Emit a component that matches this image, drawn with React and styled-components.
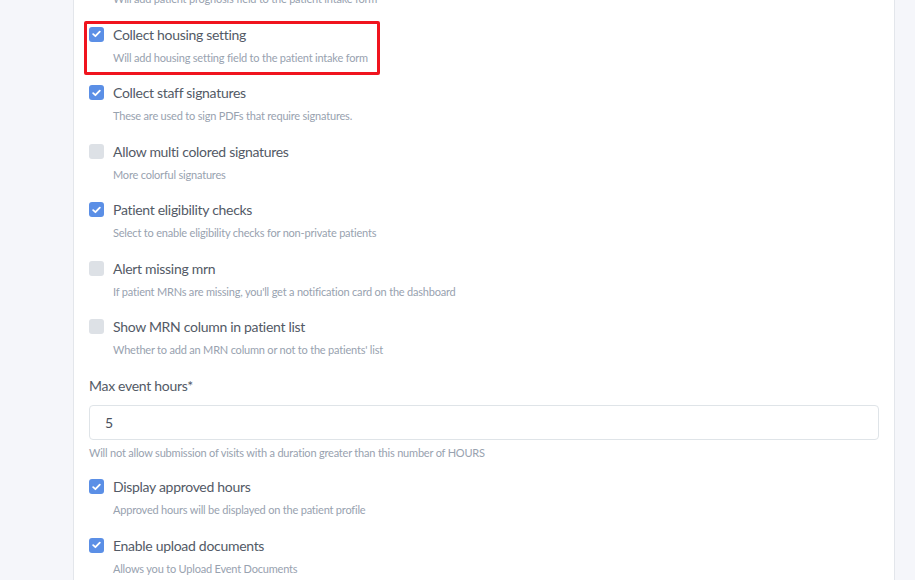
import React, { useLayoutEffect, useRef } from "react";
import styled, { createGlobalStyle } from "styled-components";

const Global = createGlobalStyle`
  html, body { margin: 0; padding: 0; }
  body {
    background: #f5f6fa;
    font-family: "Lato", "Noto Sans", sans-serif;
    -webkit-font-smoothing: antialiased;
  }
`;

const Viewport = styled.div`
  height: 100vh;
  overflow: hidden;
`;

const Page = styled.div`
  display: flex;
  padding-left: 73px;
  padding-right: 20px;
`;

const Card = styled.div`
  flex: 1;
  background: #ffffff;
  border-left: 1px solid #e3e6eb;
  border-right: 1px solid #e3e6eb;
  padding: 16px 15px 40px 15px;
  display: flex;
  flex-direction: column;
  gap: 17.5px;
`;

const Row = styled.div`
  position: relative;
  display: flex;
  align-items: flex-start;
  gap: 9px;
  width: fit-content;

  ${(p) =>
    p.$highlight &&
    `
    &::after {
      content: "";
      position: absolute;
      left: -5px;
      right: -12px;
      top: -4px;
      bottom: -9px;
      border: 3px solid #f0141e;
      border-radius: 2px;
      pointer-events: none;
    }
  `}
`;

const Box = styled.span`
  flex: none;
  width: 15px;
  height: 15px;
  margin-top: 2px;
  border-radius: 3px;
  background: ${(p) => (p.$checked ? "#5b8fe6" : "#dde1e6")};
  display: flex;
  align-items: center;
  justify-content: center;
`;

const Texts = styled.div`
  display: flex;
  flex-direction: column;
  gap: 5px;
`;

const Title = styled.div`
  font-size: 14px;
  line-height: 20px;
  letter-spacing: -0.3px;
  color: #535a66;
`;

const Desc = styled.div`
  font-size: 11px;
  line-height: 16px;
  letter-spacing: -0.2px;
  color: #98a2af;
`;

const Field = styled.div`
  display: flex;
  flex-direction: column;
  margin-bottom: -1px;
`;

const Label = styled.div`
  font-size: 14px;
  line-height: 20px;
  letter-spacing: -0.3px;
  color: #535a66;
`;

const Input = styled.div`
  margin-top: 9px;
  height: 33px;
  border: 1px solid #dfe4e8;
  border-radius: 4px;
  display: flex;
  align-items: center;
  padding-left: 15px;
  font-size: 14px;
  color: #4a505c;
`;

const Help = styled.div`
  margin-top: 5px;
  font-size: 11px;
  line-height: 16px;
  letter-spacing: -0.2px;
  color: #98a2af;
`;

const Check = () => (
  <svg width="9" height="8" viewBox="0 0 9 8">
    <path d="M1.2 4.2 L3.4 6.2 L7.8 1.6" fill="none" stroke="#fff" strokeWidth="1.8" strokeLinecap="round" strokeLinejoin="round" />
  </svg>
);

const Option = ({ checked, title, desc, highlight, innerRef }) => (
  <Row $highlight={highlight} ref={innerRef}>
    <Box $checked={checked}>{checked && <Check />}</Box>
    <Texts>
      <Title>{title}</Title>
      <Desc>{desc}</Desc>
    </Texts>
  </Row>
);

export default function App() {
  const vp = useRef(null);
  const first = useRef(null);
  useLayoutEffect(() => {
    if (vp.current && first.current) {
      vp.current.scrollTop = first.current.offsetTop - 25;
    }
  }, []);
  return (
    <Viewport ref={vp}>
      <Global />
      <Page>
        <Card>
          <Option checked title="Collect patient prognosis" desc="Will add patient prognosis field to the patient intake form" />
          <Option innerRef={first} highlight checked title="Collect housing setting" desc="Will add housing setting field to the patient intake form" />
          <Option checked title="Collect staff signatures" desc="These are used to sign PDFs that require signatures." />
          <Option title="Allow multi colored signatures" desc="More colorful signatures" />
          <Option checked title="Patient eligibility checks" desc="Select to enable eligibility checks for non-private patients" />
          <Option title="Alert missing mrn" desc="If patient MRNs are missing, you'll get a notification card on the dashboard" />
          <Option title="Show MRN column in patient list" desc="Whether to add an MRN column or not to the patients' list" />
          <Field>
            <Label>Max event hours*</Label>
            <Input>5</Input>
            <Help>Will not allow submission of visits with a duration greater than this number of HOURS</Help>
          </Field>
          <Option checked title="Display approved hours" desc="Approved hours will be displayed on the patient profile" />
          <Option checked title="Enable upload documents" desc="Allows you to Upload Event Documents" />
          <Option title="Enable event notes" desc="Notes can be attached to events" />
        </Card>
      </Page>
    </Viewport>
  );
}
